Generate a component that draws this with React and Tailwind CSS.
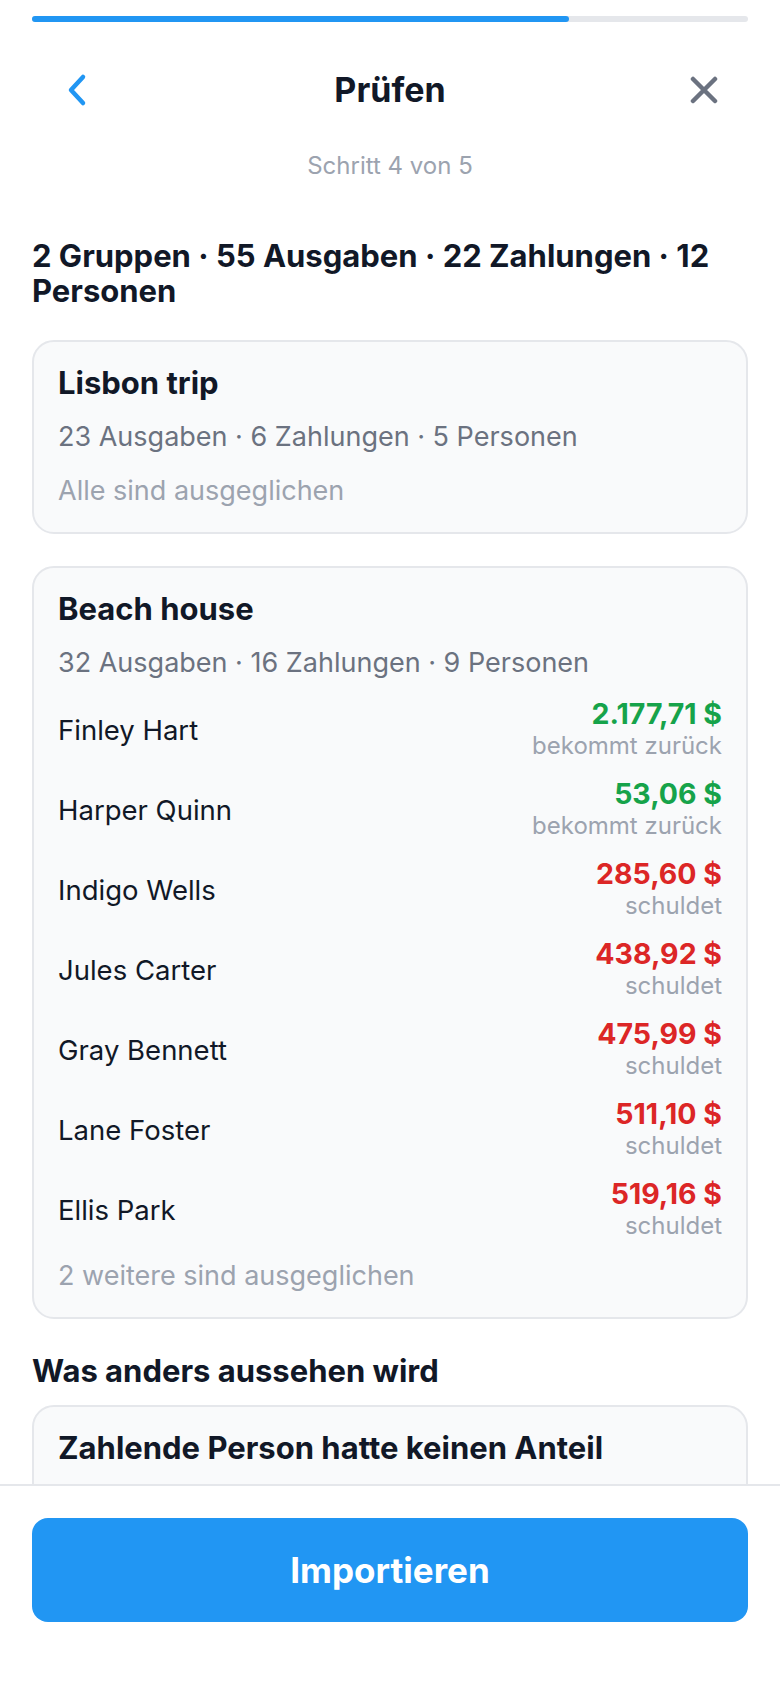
import React from 'react';

const rows = [
  { name: 'Finley Hart', amount: '2.177,71 $', note: 'bekommt zurück', back: true },
  { name: 'Harper Quinn', amount: '53,06 $', note: 'bekommt zurück', back: true },
  { name: 'Indigo Wells', amount: '285,60 $', note: 'schuldet', back: false },
  { name: 'Jules Carter', amount: '438,92 $', note: 'schuldet', back: false },
  { name: 'Gray Bennett', amount: '475,99 $', note: 'schuldet', back: false },
  { name: 'Lane Foster', amount: '511,10 $', note: 'schuldet', back: false },
  { name: 'Ellis Park', amount: '519,16 $', note: 'schuldet', back: false },
];

const Card = ({ children, className = '' }) => (
  <div className={`rounded-[22px] border-2 border-[#e5e7eb] bg-[#f9fafb] px-6 pt-6 ${className}`}>
    {children}
  </div>
);

const App = () => {
  return (
    <div className="flex h-[1688px] w-[780px] flex-col bg-white font-['Inter','Noto_Sans',sans-serif] text-[#111827]">
      <div className="flex-1 overflow-hidden px-8">
        <div className="pt-4">
          <div className="h-[6px] rounded-full bg-[#e5e7eb]">
            <div className="h-full w-3/4 rounded-full bg-[#2196f3]" />
          </div>
        </div>

        <div className="mt-10 grid h-[56px] grid-cols-[1fr_auto_1fr] items-center">
          <div className="flex">
            <svg className="ml-[34px]" width="22" height="34" viewBox="0 0 22 34" fill="none">
              <path d="M17 4 L5 17 L17 30" stroke="#2196f3" strokeWidth="4.5" strokeLinecap="round" strokeLinejoin="round" />
            </svg>
          </div>
          <h1 className="text-[34px] leading-[40px] font-bold">Prüfen</h1>
          <div className="flex justify-end">
            <svg className="mr-[30px]" width="28" height="28" viewBox="0 0 28 28" fill="none">
              <path d="M3 3 L25 25 M25 3 L3 25" stroke="#6b7280" strokeWidth="4.5" strokeLinecap="round" />
            </svg>
          </div>
        </div>

        <p className="mt-[34px] text-center text-[24px] leading-[28px] text-[#9ca3af]">Schritt 4 von 5</p>

        <h2 className="mt-[58px] text-[31px] leading-[35px] font-bold">
          2 Gruppen · 55 Ausgaben · 22 Zahlungen · 12 Personen
        </h2>

        <Card className="mt-8 pb-6">
          <h3 className="text-[31px] leading-[34px] font-bold">Lisbon trip</h3>
          <p className="mt-5 text-[27px] leading-[34px] text-[#6b7280]">23 Ausgaben · 6 Zahlungen · 5 Personen</p>
          <p className="mt-5 text-[27px] leading-[34px] text-[#9ca3af]">Alle sind ausgeglichen</p>
        </Card>

        <Card className="mt-8 pb-6">
          <h3 className="text-[31px] leading-[34px] font-bold">Beach house</h3>
          <p className="mt-5 text-[27px] leading-[34px] text-[#6b7280]">32 Ausgaben · 16 Zahlungen · 9 Personen</p>
          <ul className="mt-[18px] flex flex-col gap-4">
            {rows.map(r => (
              <li key={r.name} className="flex items-center justify-between">
                <span className="text-[27.5px] leading-[34px]">{r.name}</span>
                <div className="flex flex-col items-end">
                  <span className={`text-[28.5px] leading-[32px] font-bold ${r.back ? 'text-[#16a34a]' : 'text-[#dc2626]'}`}>{r.amount}</span>
                  <span className="text-[24px] leading-[32px] text-[#9ca3af]">{r.note}</span>
                </div>
              </li>
            ))}
          </ul>
          <p className="mt-[17px] text-[27px] leading-[34px] text-[#9ca3af]">2 weitere sind ausgeglichen</p>
        </Card>

        <h2 className="mt-[34px] text-[31px] leading-[36px] font-bold">Was anders aussehen wird</h2>

        <Card className="mt-4 pb-16">
          <h3 className="text-[31px] leading-[34px] font-bold">Zahlende Person hatte keinen Anteil</h3>
        </Card>
      </div>

      <footer className="border-t-2 border-[#e5e7eb] px-8 pt-8 pb-[66px]">
        <button className="flex h-[104px] w-full items-center justify-center rounded-2xl bg-[#2196f3] text-[35px] font-bold text-white">
          Importieren
        </button>
      </footer>
    </div>
  );
};

export default App;
